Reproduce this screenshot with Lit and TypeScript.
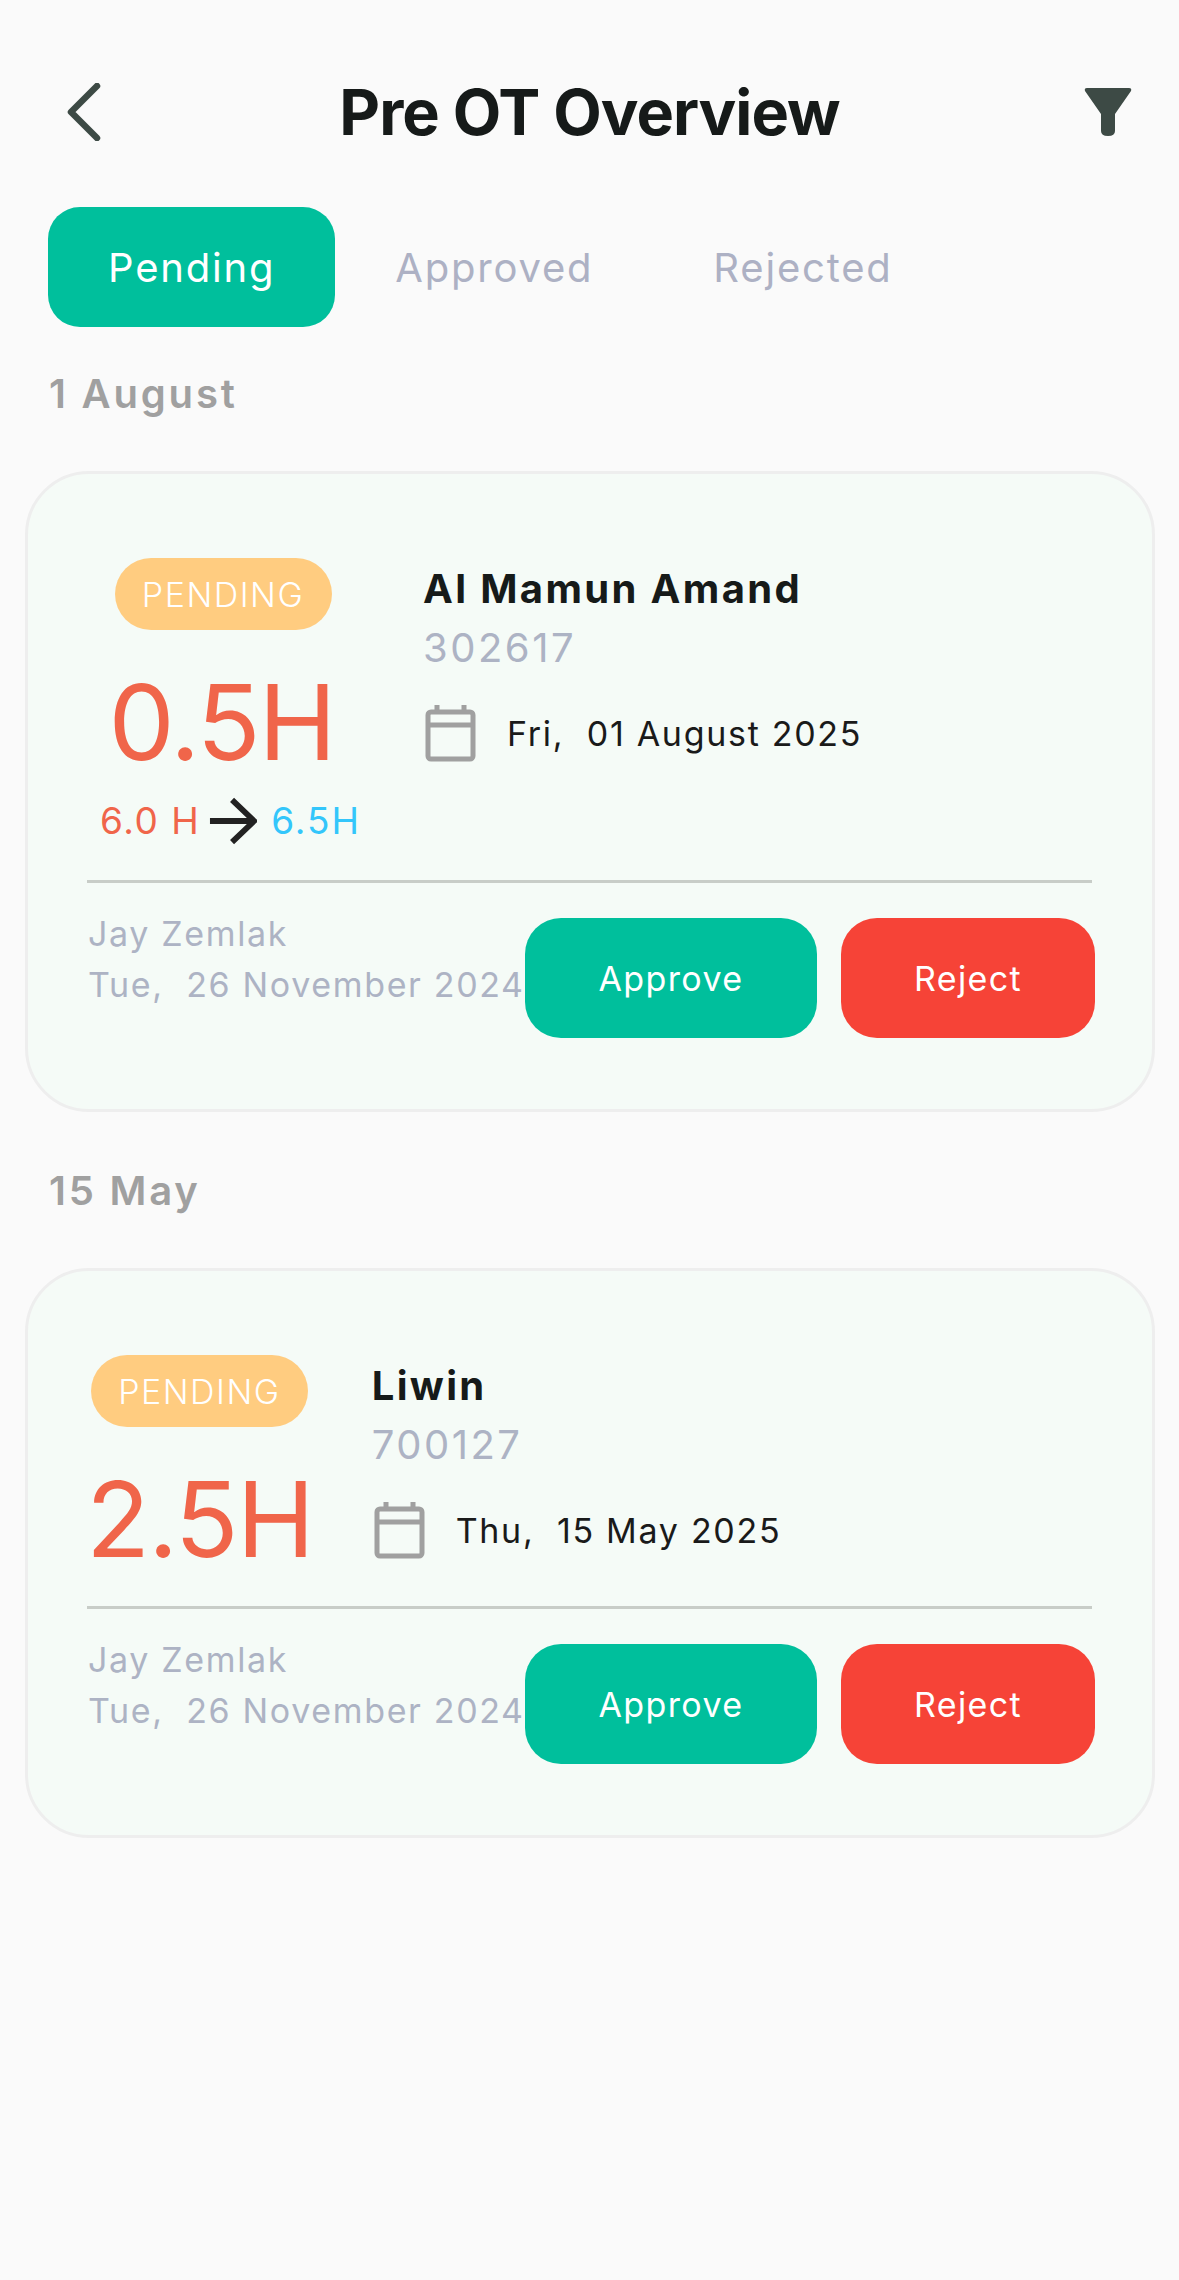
import { LitElement, html, css, svg } from 'lit';
import { customElement } from 'lit/decorators.js';

interface OtEntry {
  day: string;
  hours: string;
  name: string;
  id: string;
  date: string;
  change?: [string, string];
}

const ENTRIES: OtEntry[] = [
  { day: '1 August', hours: '0.5H', name: 'Al Mamun Amand', id: '302617', date: 'Fri,  01 August 2025', change: ['6.0 H', '6.5H'] },
  { day: '15 May', hours: '2.5H', name: 'Liwin', id: '700127', date: 'Thu,  15 May 2025' },
];

const calendarIcon = svg`
  <rect x="3" y="8" width="45" height="47" rx="3" fill="none" stroke="#a0a0a0" stroke-width="5"/>
  <path d="M3 21H48M12 1V8M39 1V8" fill="none" stroke="#a0a0a0" stroke-width="5"/>
`;

@customElement('app-root')
export class AppRoot extends LitElement {
  static styles = css`
    :host {
      display: block;
      width: 1179px;
      height: 2280px;
      background: #fafafa;
      font-family: Inter, 'Liberation Sans', sans-serif;
      overflow: hidden;
    }
    .header {
      display: grid;
      grid-template-columns: 1fr auto 1fr;
      align-items: center;
      height: 62px;
      padding: 81px 47px 0 47px;
    }
    .back { width: 34px; height: 58px; display: block; margin-left: 20px; }
    .filter { width: 48px; height: 48px; display: block; justify-self: end; }
    h1 {
      margin: 0;
      font-size: 63px;
      line-height: 62px;
      font-weight: 700;
      letter-spacing: -1px;
      color: #161a19;
    }
    .tabs {
      display: flex;
      margin-top: 64px;
      padding-left: 48px;
    }
    .tab {
      height: 120px;
      padding: 0 60px;
      display: flex;
      align-items: center;
      border-radius: 32px;
      font-size: 40px;
      letter-spacing: 1.8px;
      color: #adb1c4;
    }
    .tab.active { background: #00bf9c; color: #fff; }
    .day {
      margin: 43px 0 0 49px;
      font-size: 40px;
      line-height: 48px;
      font-weight: 600;
      letter-spacing: 2.8px;
      color: #a0a0a0;
    }
    .card {
      box-sizing: border-box;
      width: 1130px;
      margin: 53px 0 55px 25px;
      padding: 84px 60px 71px 59px;
      background: #f5fbf7;
      border: 3px solid #eeeeee;
      border-radius: 64px;
    }
    .main { display: flex; }
    .main.has-change { padding-left: 13px; height: 322px; gap: 62px; }
    .main.no-change { margin-left: -1px; height: 251px; gap: 59px; }
    .left { display: flex; flex-direction: column; align-items: center; }
    .has-change .badge { margin-right: 15px; }
    .has-change .hours { margin-right: 18px; }
    .badge {
      height: 72px;
      width: 217px;
      display: flex;
      align-items: center;
      justify-content: center;
      border-radius: 36px;
      background: #ffcc80;
      color: #fff;
      font-size: 34px;
      font-weight: 300;
      letter-spacing: 1.5px;
    }
    .hours {
      margin-top: 37px;
      font-size: 105px;
      line-height: 110px;
      letter-spacing: -2px;
      color: #f0654a;
    }
    .change {
      display: flex;
      align-items: center;
      gap: 11px;
      margin-top: 19px;
      font-size: 37px;
      line-height: 50px;
      letter-spacing: 1.5px;
      white-space: nowrap;
    }
    .from { color: #f0654a; margin-right: -2px; }
    .to { color: #33c6fb; letter-spacing: 2px; margin-left: 3px; }
    .arrow { width: 48px; height: 48px; display: block; }
    .info { padding-top: 7px; }
    .name {
      font-size: 40px;
      line-height: 48px;
      font-weight: 700;
      letter-spacing: 2.35px;
      color: #161a19;
    }
    .id {
      margin-top: 11px;
      font-size: 40px;
      line-height: 48px;
      letter-spacing: 2.5px;
      color: #adb3c4;
    }
    .date-row {
      display: flex;
      align-items: center;
      gap: 31px;
      margin-top: 32px;
      padding-left: 2px;
    }
    .calendar { width: 51px; height: 58px; display: block; }
    .date {
      font-size: 34px;
      letter-spacing: 1.7px;
      white-space: pre;
      color: #1a1a1a;
    }
    .rule { height: 3px; background: #c8cdc8; }
    .foot {
      display: flex;
      align-items: flex-start;
      margin-top: 35px;
    }
    .who {
      flex: 1;
      min-width: 0;
      margin-top: -10px;
      padding-left: 1px;
      font-size: 34px;
      line-height: 51px;
      letter-spacing: 1.65px;
      white-space: pre;
      color: #adb3c4;
    }
    .btn {
      height: 120px;
      display: flex;
      align-items: center;
      justify-content: center;
      border-radius: 36px;
      color: #fff;
      font-size: 34px;
      font-weight: 400;
      letter-spacing: 1.4px;
    }
    .approve { width: 292px; background: #00bf9c; }
    .reject { width: 254px; margin-left: 24px; margin-right: -3px; background: #f64337; }
  `;

  private renderEntry(e: OtEntry) {
    return html`
      <div class="day">${e.day}</div>
      <section class="card">
        <div class="main ${e.change ? 'has-change' : 'no-change'}">
          <div class="left">
            <div class="badge">PENDING</div>
            <div class="hours">${e.hours}</div>
            ${e.change
              ? html`<div class="change">
                  <span class="from">${e.change[0]}</span>
                  <svg class="arrow" viewBox="0 0 50 50">
                    <path d="M1 25H46M24 3L47 25L24 47" fill="none" stroke="#222" stroke-width="6"/>
                  </svg>
                  <span class="to">${e.change[1]}</span>
                </div>`
              : ''}
          </div>
          <div class="info">
            <div class="name">${e.name}</div>
            <div class="id">${e.id}</div>
            <div class="date-row">
              <svg class="calendar" viewBox="0 0 51 58">${calendarIcon}</svg>
              <span class="date">${e.date}</span>
            </div>
          </div>
        </div>
        <div class="rule"></div>
        <div class="foot">
          <div class="who">Jay Zemlak
Tue,  26 November 2024</div>
          <div class="btn approve">Approve</div>
          <div class="btn reject">Reject</div>
        </div>
      </section>
    `;
  }

  render() {
    return html`
      <header class="header">
        <svg class="back" viewBox="0 0 34 58">
          <path d="M30 3L4 29L30 55" fill="none" stroke="#3d4a45" stroke-width="6.5" stroke-linecap="round" stroke-linejoin="round"/>
        </svg>
        <h1>Pre OT Overview</h1>
        <svg class="filter" viewBox="0 0 48 48">
          <path d="M3 0H45Q48 0 47 3L31 26V43Q31 48 24 48Q17 48 17 43V26L1 3Q0 0 3 0Z" fill="#3d4a45"/>
        </svg>
      </header>
      <nav class="tabs">
        <div class="tab active">Pending</div>
        <div class="tab">Approved</div>
        <div class="tab">Rejected</div>
      </nav>
      ${ENTRIES.map((e) => this.renderEntry(e))}
    `;
  }
}
